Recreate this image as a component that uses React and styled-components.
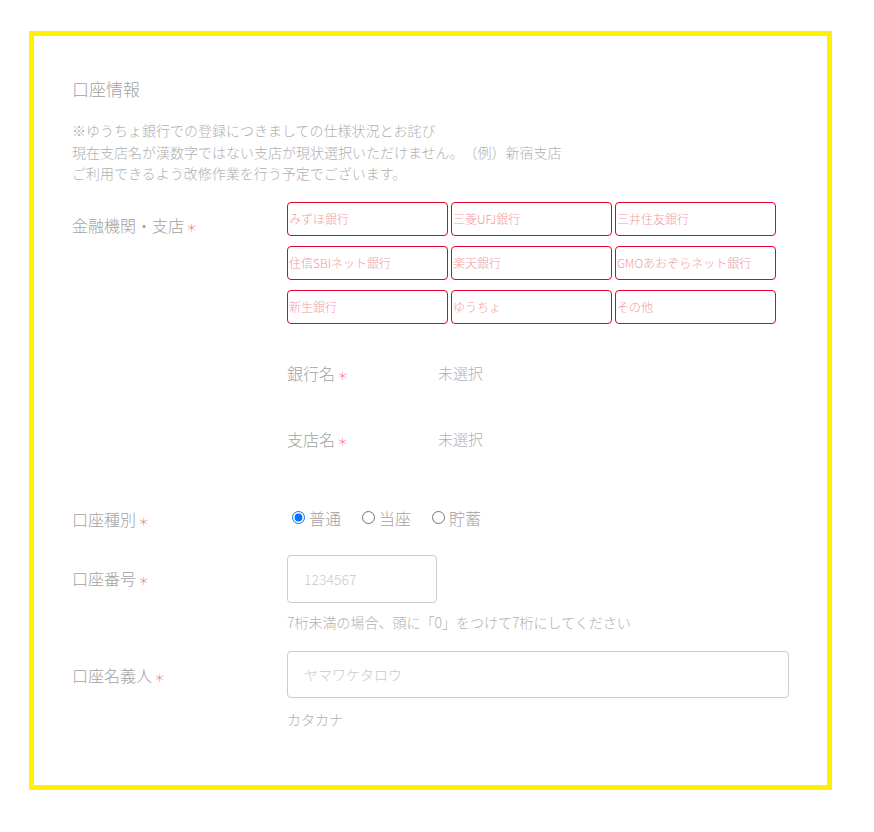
import React from "react";
import styled, { createGlobalStyle } from "styled-components";

const Global = createGlobalStyle`
  html, body { margin: 0; padding: 0; background: #fff; }
  body {
    font-family: "Noto Sans CJK JP", "Noto Sans", sans-serif;
    font-weight: 300;
    text-spacing-trim: space-all;
  }
  * { box-sizing: border-box; }
`;

const Page = styled.div`
  padding: 31px 0 0 29px;
  width: 874px;
  height: 832px;
`;

const Frame = styled.section`
  width: 803px;
  height: 759px;
  border: 5px solid #fff100;
  padding: 41px 38px 0 38px;
`;

const Title = styled.h2`
  margin: 0;
  font-size: 17px;
  line-height: 24px;
  font-weight: 300;
  color: #a2a2a2;
`;

const Note = styled.p`
  margin: 19px 0 0;
  font-size: 14px;
  line-height: 21.5px;
  color: #b0b0b0;
`;

const Row = styled.div`
  display: grid;
  grid-template-columns: 215px 1fr;
  align-items: start;
  margin-top: ${(p) => p.$mt}px;
`;

const Label = styled.div`
  padding-top: ${(p) => p.$pt || 0}px;
  height: ${(p) => (p.$pt || 0) + 24}px;
  font-size: 16px;
  line-height: 24px;
  color: #a2a2a2;
`;

const Req = styled.span`
  display: inline-block;
  color: #f07a8c;
  font-size: 11px;
  line-height: 11px;
  margin-left: 2px;
  vertical-align: 0;
`;

const BankGrid = styled.div`
  display: grid;
  grid-template-columns: repeat(3, 161px);
  column-gap: 3px;
  row-gap: 10px;
`;

const BankButton = styled.button`
  height: 34px;
  border: 1px solid #e4002b;
  border-radius: 4px;
  background: #fff;
  padding: 0 1px;
  text-align: left;
  font-family: inherit;
  font-weight: 300;
  font-size: 12px;
  color: #f29aa2;
  cursor: pointer;
`;

const SubRow = styled.div`
  display: grid;
  grid-template-columns: 151px 1fr;
  height: 24px;
  margin-top: ${(p) => p.$mt}px;
  font-size: 16px;
  line-height: 24px;
  color: #a2a2a2;
`;

const SubValue = styled.div`
  font-size: 15px;
  color: #b0b0b0;
`;

const Radios = styled.div`
  display: flex;
  align-items: center;
  height: 24px;
`;

const RadioLabel = styled.label`
  display: flex;
  align-items: center;
  font-size: 16px;
  line-height: 24px;
  color: #a2a2a2;
  margin-right: 16px;
  input { margin: 0 4px 0 5px; width: 13px; height: 13px; }
`;

const Field = styled.div`
  display: flex;
  flex-direction: column;
  align-items: flex-start;
`;

const Input = styled.input`
  display: block;
  width: ${(p) => p.$w}px;
  height: ${(p) => p.$h}px;
  border: 1px solid #ccc;
  border-radius: 4px;
  padding: 0 16px;
  font-family: inherit;
  font-weight: 300;
  font-size: 14px;
  color: #666;
  outline: none;
  &::placeholder { color: #cacaca; }
`;

const Hint = styled.div`
  margin-top: ${(p) => p.$mt}px;
  font-size: 14px;
  line-height: 20px;
  color: #b0b0b0;
`;

const banks = [
  "みずほ銀行",
  "三菱UFJ銀行",
  "三井住友銀行",
  "住信SBIネット銀行",
  "楽天銀行",
  "GMOあおぞらネット銀行",
  "新生銀行",
  "ゆうちょ",
  "その他",
];

export default function App() {
  return (
    <Page>
      <Global />
      <Frame>
        <Title>口座情報</Title>
        <Note>
          ※ゆうちょ銀行での登録につきましての仕様状況とお詫び
          <br />
          現在支店名が漢数字ではない支店が現状選択いただけません。（例）新宿支店
          <br />
          ご利用できるよう改修作業を行う予定でございます。
        </Note>

        <Row $mt={17}>
          <Label $pt={11}>
            金融機関・支店<Req>＊</Req>
          </Label>
          <div>
            <BankGrid>
              {banks.map((b) => (
                <BankButton key={b} type="button">
                  {b}
                </BankButton>
              ))}
            </BankGrid>
            <SubRow $mt={37}>
              <div>
                銀行名<Req>＊</Req>
              </div>
              <SubValue>未選択</SubValue>
            </SubRow>
            <SubRow $mt={42}>
              <div>
                支店名<Req>＊</Req>
              </div>
              <SubValue>未選択</SubValue>
            </SubRow>
          </div>
        </Row>

        <Row $mt={55}>
          <Label $pt={1}>
            口座種別<Req>＊</Req>
          </Label>
          <Radios>
            <RadioLabel>
              <input type="radio" name="kind" defaultChecked />
              普通
            </RadioLabel>
            <RadioLabel>
              <input type="radio" name="kind" />
              当座
            </RadioLabel>
            <RadioLabel>
              <input type="radio" name="kind" />
              貯蓄
            </RadioLabel>
          </Radios>
        </Row>

        <Row $mt={24}>
          <Label $pt={11}>
            口座番号<Req>＊</Req>
          </Label>
          <Field>
            <Input $w={150} $h={48} placeholder="1234567" />
            <Hint $mt={9}>7桁未満の場合、頭に「0」をつけて7桁にしてください</Hint>
          </Field>
        </Row>

        <Row $mt={19}>
          <Label $pt={12}>
            口座名義人<Req>＊</Req>
          </Label>
          <Field>
            <Input $w={502} $h={47} placeholder="ヤマワケタロウ" />
            <Hint $mt={11}>カタカナ</Hint>
          </Field>
        </Row>
      </Frame>
    </Page>
  );
}
